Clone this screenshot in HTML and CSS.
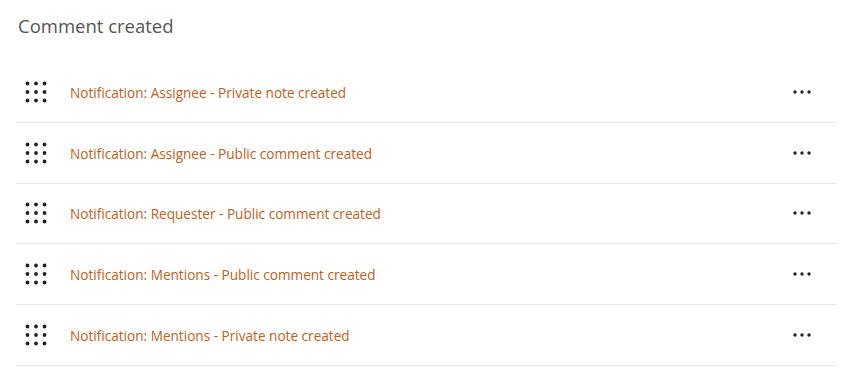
FILE: index.html
```html
<!DOCTYPE html>
<html>
<head>
<meta charset="utf-8">
<link rel="stylesheet" href="styles.css">
</head>
<body>
<div class="panel">
  <h2 class="title">Comment created</h2>
  <ul class="list">
    <li class="row">
      <span class="grip"><svg width="22" height="22" viewBox="0 0 22 22"><g fill="#222"><circle cx="2.5" cy="2.5" r="1.9"/><circle cx="11" cy="2.5" r="1.9"/><circle cx="19.5" cy="2.5" r="1.9"/><circle cx="2.5" cy="11" r="1.9"/><circle cx="11" cy="11" r="1.9"/><circle cx="19.5" cy="11" r="1.9"/><circle cx="2.5" cy="19.5" r="1.9"/><circle cx="11" cy="19.5" r="1.9"/><circle cx="19.5" cy="19.5" r="1.9"/></g></svg></span>
      <a class="name">Notification: Assignee - Private note created</a>
      <span class="more"><svg width="20" height="6" viewBox="0 0 20 6"><g fill="#222"><circle cx="3" cy="3" r="1.7"/><circle cx="10" cy="3" r="1.7"/><circle cx="17" cy="3" r="1.7"/></g></svg></span>
    </li>
    <li class="row">
      <span class="grip"><svg width="22" height="22" viewBox="0 0 22 22"><g fill="#222"><circle cx="2.5" cy="2.5" r="1.9"/><circle cx="11" cy="2.5" r="1.9"/><circle cx="19.5" cy="2.5" r="1.9"/><circle cx="2.5" cy="11" r="1.9"/><circle cx="11" cy="11" r="1.9"/><circle cx="19.5" cy="11" r="1.9"/><circle cx="2.5" cy="19.5" r="1.9"/><circle cx="11" cy="19.5" r="1.9"/><circle cx="19.5" cy="19.5" r="1.9"/></g></svg></span>
      <a class="name">Notification: Assignee - Public comment created</a>
      <span class="more"><svg width="20" height="6" viewBox="0 0 20 6"><g fill="#222"><circle cx="3" cy="3" r="1.7"/><circle cx="10" cy="3" r="1.7"/><circle cx="17" cy="3" r="1.7"/></g></svg></span>
    </li>
    <li class="row">
      <span class="grip"><svg width="22" height="22" viewBox="0 0 22 22"><g fill="#222"><circle cx="2.5" cy="2.5" r="1.9"/><circle cx="11" cy="2.5" r="1.9"/><circle cx="19.5" cy="2.5" r="1.9"/><circle cx="2.5" cy="11" r="1.9"/><circle cx="11" cy="11" r="1.9"/><circle cx="19.5" cy="11" r="1.9"/><circle cx="2.5" cy="19.5" r="1.9"/><circle cx="11" cy="19.5" r="1.9"/><circle cx="19.5" cy="19.5" r="1.9"/></g></svg></span>
      <a class="name">Notification: Requester - Public comment created</a>
      <span class="more"><svg width="20" height="6" viewBox="0 0 20 6"><g fill="#222"><circle cx="3" cy="3" r="1.7"/><circle cx="10" cy="3" r="1.7"/><circle cx="17" cy="3" r="1.7"/></g></svg></span>
    </li>
    <li class="row">
      <span class="grip"><svg width="22" height="22" viewBox="0 0 22 22"><g fill="#222"><circle cx="2.5" cy="2.5" r="1.9"/><circle cx="11" cy="2.5" r="1.9"/><circle cx="19.5" cy="2.5" r="1.9"/><circle cx="2.5" cy="11" r="1.9"/><circle cx="11" cy="11" r="1.9"/><circle cx="19.5" cy="11" r="1.9"/><circle cx="2.5" cy="19.5" r="1.9"/><circle cx="11" cy="19.5" r="1.9"/><circle cx="19.5" cy="19.5" r="1.9"/></g></svg></span>
      <a class="name">Notification: Mentions - Public comment created</a>
      <span class="more"><svg width="20" height="6" viewBox="0 0 20 6"><g fill="#222"><circle cx="3" cy="3" r="1.7"/><circle cx="10" cy="3" r="1.7"/><circle cx="17" cy="3" r="1.7"/></g></svg></span>
    </li>
    <li class="row">
      <span class="grip"><svg width="22" height="22" viewBox="0 0 22 22"><g fill="#222"><circle cx="2.5" cy="2.5" r="1.9"/><circle cx="11" cy="2.5" r="1.9"/><circle cx="19.5" cy="2.5" r="1.9"/><circle cx="2.5" cy="11" r="1.9"/><circle cx="11" cy="11" r="1.9"/><circle cx="19.5" cy="11" r="1.9"/><circle cx="2.5" cy="19.5" r="1.9"/><circle cx="11" cy="19.5" r="1.9"/><circle cx="19.5" cy="19.5" r="1.9"/></g></svg></span>
      <a class="name">Notification: Mentions - Private note created</a>
      <span class="more"><svg width="20" height="6" viewBox="0 0 20 6"><g fill="#222"><circle cx="3" cy="3" r="1.7"/><circle cx="10" cy="3" r="1.7"/><circle cx="17" cy="3" r="1.7"/></g></svg></span>
    </li>
  </ul>
</div>
</body>
</html>
```
FILE: styles.css
```css
html, body {
  margin: 0;
  padding: 0;
  background: #fff;
}
body {
  font-family: "Open Sans", "Noto Sans", sans-serif;
}
.panel {
  padding: 12px 16px 0 16px;
  width: 820px;
}
.title {
  margin: 0 0 0 2px;
  font-size: 18.5px;
  font-weight: 400;
  color: #555;
  line-height: 28px;
}
.list {
  list-style: none;
  margin: 22px 0 0 0;
  padding: 0;
}
.row {
  display: flex;
  align-items: center;
  height: 59.75px;
  border-bottom: 1px solid #e6e6e6;
}
.grip {
  display: flex;
  width: 22px;
  height: 22px;
  margin-left: 9px;
  margin-right: 23px;
}
.name {
  flex: 1;
  padding-top: 1px;
  font-size: 13.6px;
  color: #c0601a;
}
.more {
  display: flex;
  margin-right: 24px;
}
```
